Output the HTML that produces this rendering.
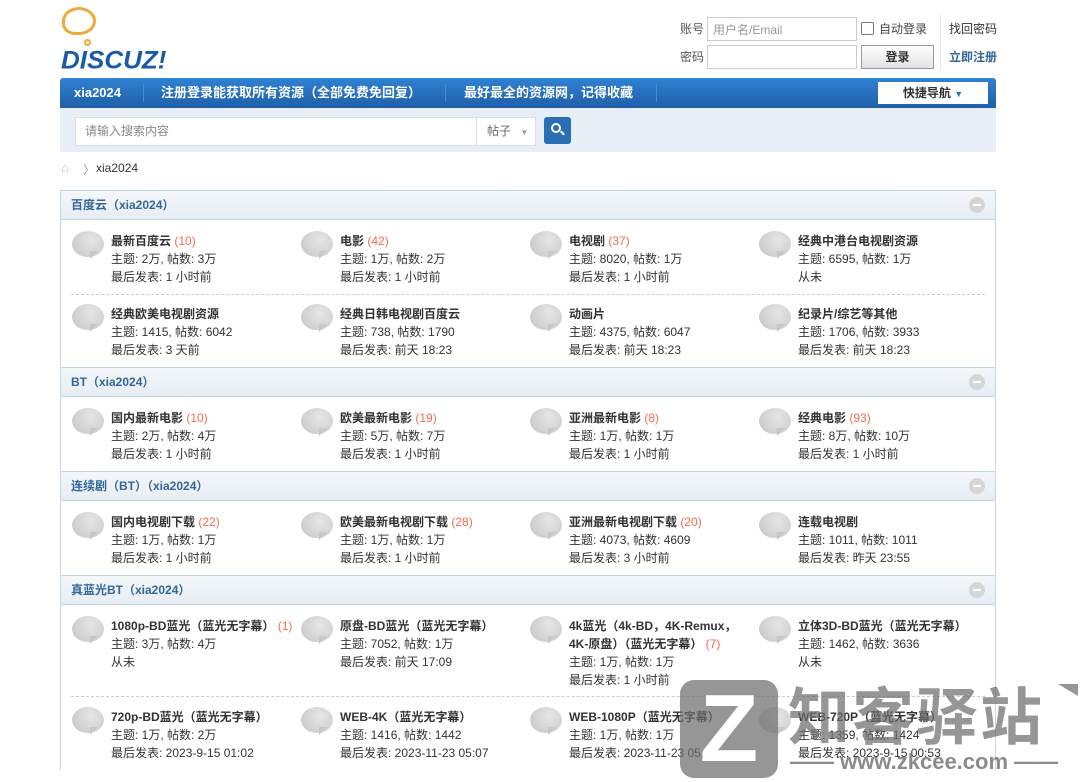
<!DOCTYPE html>
<html><head><meta charset="utf-8"><style>
*{margin:0;padding:0;box-sizing:border-box}
body{width:1080px;height:778px;overflow:hidden;background:#fff;font:12px "Liberation Sans","Noto Sans CJK SC",sans-serif;color:#333;position:relative}
.a{position:absolute}
.nav{left:60px;top:78px;width:936px;height:30px;background:linear-gradient(#2f82d2,#1f5fa9);border-radius:3px 3px 0 0}
.nav .l{position:absolute;top:0;line-height:30px;color:#fff;font-weight:bold;font-size:13px}
.nav i{position:absolute;top:6px;width:1px;height:18px;background:#4a8ad0}
.sbar{left:60px;top:108px;width:936px;height:44px;background:#e8eef5}
.box{left:60px;top:190px;width:936px;height:580px;border:1px solid #cdd6df;border-bottom:none}
.hd{position:absolute;left:0;width:934px;height:30px;background:linear-gradient(#f4f7fa,#e6edf3);border-top:1px solid #c2d5e3;border-bottom:1px solid #c2d5e3;line-height:28px;padding-left:10px;color:#336699;font-weight:bold}
.hd b{position:absolute;right:10px;top:6px;width:16px;height:16px;border-radius:50%;background:#d6d6d6}
.hd b:after{content:"";position:absolute;left:4px;top:7px;width:8px;height:2px;background:#fff}
.it{position:absolute;width:225px;line-height:18px}
.it .ic{position:absolute;left:-39px;top:-1px;width:32px;height:26px;border-radius:50%;background:radial-gradient(circle at 60% 35%,#e6e6e6,#c4c4c4)}
.it .ic:after{content:"";position:absolute;left:18px;top:20px;border-left:8px solid #c8c8c8;border-bottom:8px solid transparent}
.t{font-weight:bold;color:#333}
.n{color:#f26c4f;font-weight:normal}
.dash{position:absolute;left:10px;width:914px;border-top:1px dashed #ccc}
</style></head><body>
<div class="a" style="left:60px;top:5px;width:126px;height:66px;background:#fff">
<div class="a" style="left:2px;top:2px;width:34px;height:28px;border:3px solid #f0a838;border-radius:50% 50% 50% 40%"></div>
<div class="a" style="left:24px;top:34px;width:7px;height:7px;border:2px solid #f0a838;border-radius:50%"></div>
<div class="a" style="left:1px;top:40px;font:italic bold 26px 'Liberation Sans',sans-serif;color:#1a5aa8;transform:scaleY(0.95)">DISCUZ!</div>
</div>
<div class="a" style="left:680px;top:20px;color:#555">账号</div>
<div class="a" style="left:680px;top:48px;color:#555">密码</div>
<div class="a" style="left:707px;top:17px;width:150px;height:24px;border:1px solid #ccc;color:#999;padding:3px 5px">用户名/Email</div>
<div class="a" style="left:707px;top:45px;width:150px;height:24px;border:1px solid #ccc"></div>
<div class="a" style="left:861px;top:22px;width:13px;height:13px;border:1px solid #777;border-radius:2px"></div>
<div class="a" style="left:879px;top:20px;color:#444">自动登录</div>
<div class="a" style="left:861px;top:45px;width:73px;height:24px;border:1px solid #999;background:linear-gradient(#fff,#e2e2e2);text-align:center;line-height:22px;font-weight:bold">登录</div>
<div class="a" style="left:940px;top:15px;width:1px;height:54px;background:#e5e5e5"></div>
<div class="a" style="left:949px;top:20px;color:#333">找回密码</div>
<div class="a" style="left:949px;top:48px;color:#336699;font-weight:bold">立即注册</div>
<div class="a nav">
<span class="l" style="left:14px">xia2024</span><i style="left:83px"></i>
<span class="l" style="left:101px">注册登录能获取所有资源（全部免费免回复）</span><i style="left:385px"></i>
<span class="l" style="left:404px">最好最全的资源网，记得收藏</span><i style="left:596px"></i>
<div class="a" style="left:818px;top:4px;width:110px;height:22px;background:#fff;color:#333;text-align:center;line-height:22px;font-weight:bold;font-size:12px">快捷导航 <span style="color:#2a6fc0;font-size:9px">▼</span></div>
</div>
<div class="a sbar">
<div class="a" style="left:15px;top:9px;width:402px;height:29px;background:#fff;border:1px solid #dde;color:#888;padding-left:9px;line-height:27px">请输入搜索内容</div>
<div class="a" style="left:416px;top:9px;width:60px;height:29px;background:#fff;border:1px solid #dde;color:#666;line-height:27px;padding-left:10px">帖子 <span style="color:#999;font-size:8px;margin-left:6px">▼</span></div>
<div class="a" style="left:484px;top:9px;width:27px;height:27px;background:#2a6eb3;border-radius:3px">
<div class="a" style="left:7px;top:6px;width:10px;height:10px;border:2px solid #fff;border-radius:50%"></div>
<div class="a" style="left:16px;top:15px;width:5px;height:2px;background:#fff;transform:rotate(45deg)"></div></div>
</div>
<div class="a" style="left:61px;top:162px;width:14px;height:12px;color:#b5c6d6;font-size:13px;line-height:12px">⌂</div>
<div class="a" style="left:83px;top:161px;color:#999">〉</div>
<div class="a" style="left:96px;top:161px;color:#333">xia2024</div>

<div class="a box">
<div class="hd" style="top:-1px">百度云（xia2024）<b></b></div>
<div class="it" style="left:50px;top:41px"><div class="ic"></div><div class="t">最新百度云 <span class="n">(10)</span></div>主题: 2万, 帖数: 3万<br>最后发表: 1 小时前</div>
<div class="it" style="left:279px;top:41px"><div class="ic"></div><div class="t">电影 <span class="n">(42)</span></div>主题: 1万, 帖数: 2万<br>最后发表: 1 小时前</div>
<div class="it" style="left:508px;top:41px"><div class="ic"></div><div class="t">电视剧 <span class="n">(37)</span></div>主题: 8020, 帖数: 1万<br>最后发表: 1 小时前</div>
<div class="it" style="left:737px;top:41px"><div class="ic"></div><div class="t">经典中港台电视剧资源</div>主题: 6595, 帖数: 1万<br>从未</div>
<div class="dash" style="top:103px"></div>
<div class="it" style="left:50px;top:114px"><div class="ic"></div><div class="t">经典欧美电视剧资源</div>主题: 1415, 帖数: 6042<br>最后发表: 3 天前</div>
<div class="it" style="left:279px;top:114px"><div class="ic"></div><div class="t">经典日韩电视剧百度云</div>主题: 738, 帖数: 1790<br>最后发表: 前天 18:23</div>
<div class="it" style="left:508px;top:114px"><div class="ic"></div><div class="t">动画片</div>主题: 4375, 帖数: 6047<br>最后发表: 前天 18:23</div>
<div class="it" style="left:737px;top:114px"><div class="ic"></div><div class="t">纪录片/综艺等其他</div>主题: 1706, 帖数: 3933<br>最后发表: 前天 18:23</div>

<div class="hd" style="top:176px">BT（xia2024）<b></b></div>
<div class="it" style="left:50px;top:218px"><div class="ic"></div><div class="t">国内最新电影 <span class="n">(10)</span></div>主题: 2万, 帖数: 4万<br>最后发表: 1 小时前</div>
<div class="it" style="left:279px;top:218px"><div class="ic"></div><div class="t">欧美最新电影 <span class="n">(19)</span></div>主题: 5万, 帖数: 7万<br>最后发表: 1 小时前</div>
<div class="it" style="left:508px;top:218px"><div class="ic"></div><div class="t">亚洲最新电影 <span class="n">(8)</span></div>主题: 1万, 帖数: 1万<br>最后发表: 1 小时前</div>
<div class="it" style="left:737px;top:218px"><div class="ic"></div><div class="t">经典电影 <span class="n">(93)</span></div>主题: 8万, 帖数: 10万<br>最后发表: 1 小时前</div>

<div class="hd" style="top:280px">连续剧（BT）（xia2024）<b></b></div>
<div class="it" style="left:50px;top:322px"><div class="ic"></div><div class="t">国内电视剧下载 <span class="n">(22)</span></div>主题: 1万, 帖数: 1万<br>最后发表: 1 小时前</div>
<div class="it" style="left:279px;top:322px"><div class="ic"></div><div class="t">欧美最新电视剧下载 <span class="n">(28)</span></div>主题: 1万, 帖数: 1万<br>最后发表: 1 小时前</div>
<div class="it" style="left:508px;top:322px"><div class="ic"></div><div class="t">亚洲最新电视剧下载 <span class="n">(20)</span></div>主题: 4073, 帖数: 4609<br>最后发表: 3 小时前</div>
<div class="it" style="left:737px;top:322px"><div class="ic"></div><div class="t">连载电视剧</div>主题: 1011, 帖数: 1011<br>最后发表: 昨天 23:55</div>

<div class="hd" style="top:384px">真蓝光BT（xia2024）<b></b></div>
<div class="it" style="left:50px;top:426px"><div class="ic"></div><div class="t">1080p-BD蓝光（蓝光无字幕） <span class="n">(1)</span></div>主题: 3万, 帖数: 4万<br>从未</div>
<div class="it" style="left:279px;top:426px"><div class="ic"></div><div class="t">原盘-BD蓝光（蓝光无字幕）</div>主题: 7052, 帖数: 1万<br>最后发表: 前天 17:09</div>
<div class="it" style="left:508px;top:426px;width:180px"><div class="ic"></div><div class="t">4k蓝光（4k-BD，4K-Remux，<br>4K-原盘）（蓝光无字幕） <span class="n">(7)</span></div>主题: 1万, 帖数: 1万<br>最后发表: 1 小时前</div>
<div class="it" style="left:737px;top:426px"><div class="ic"></div><div class="t">立体3D-BD蓝光（蓝光无字幕）</div>主题: 1462, 帖数: 3636<br>从未</div>
<div class="dash" style="top:505px"></div>
<div class="it" style="left:50px;top:517px"><div class="ic"></div><div class="t">720p-BD蓝光（蓝光无字幕）</div>主题: 1万, 帖数: 2万<br>最后发表: 2023-9-15 01:02</div>
<div class="it" style="left:279px;top:517px"><div class="ic"></div><div class="t">WEB-4K（蓝光无字幕）</div>主题: 1416, 帖数: 1442<br>最后发表: 2023-11-23 05:07</div>
<div class="it" style="left:508px;top:517px"><div class="ic"></div><div class="t">WEB-1080P（蓝光无字幕）</div>主题: 1万, 帖数: 1万<br>最后发表: 2023-11-23 05:06</div>
<div class="it" style="left:737px;top:517px"><div class="ic"></div><div class="t">WEB-720P（蓝光无字幕）</div>主题: 1359, 帖数: 1424<br>最后发表: 2023-9-15 00:53</div>
</div>

<div class="a" style="left:680px;top:680px;width:98px;height:98px;background:rgba(110,110,110,.72);border-radius:14px;color:#fff;font:bold 96px 'Liberation Sans',sans-serif;line-height:98px;text-align:center">Z</div>
<div class="a" style="left:788px;top:674px;font:bold 62px 'Noto Sans CJK SC',sans-serif;line-height:76px;color:rgba(110,110,110,.72);letter-spacing:2px">知客驿站</div>
<div class="a" style="left:1058px;top:684px;border-right:20px solid rgba(110,110,110,.72);border-bottom:12px solid transparent"></div>
<div class="a" style="left:790px;top:752px;font:bold 22px 'Liberation Sans',sans-serif;color:rgba(110,110,110,.8);line-height:20px">—— www.zkcee.com ——</div>
</body></html>
